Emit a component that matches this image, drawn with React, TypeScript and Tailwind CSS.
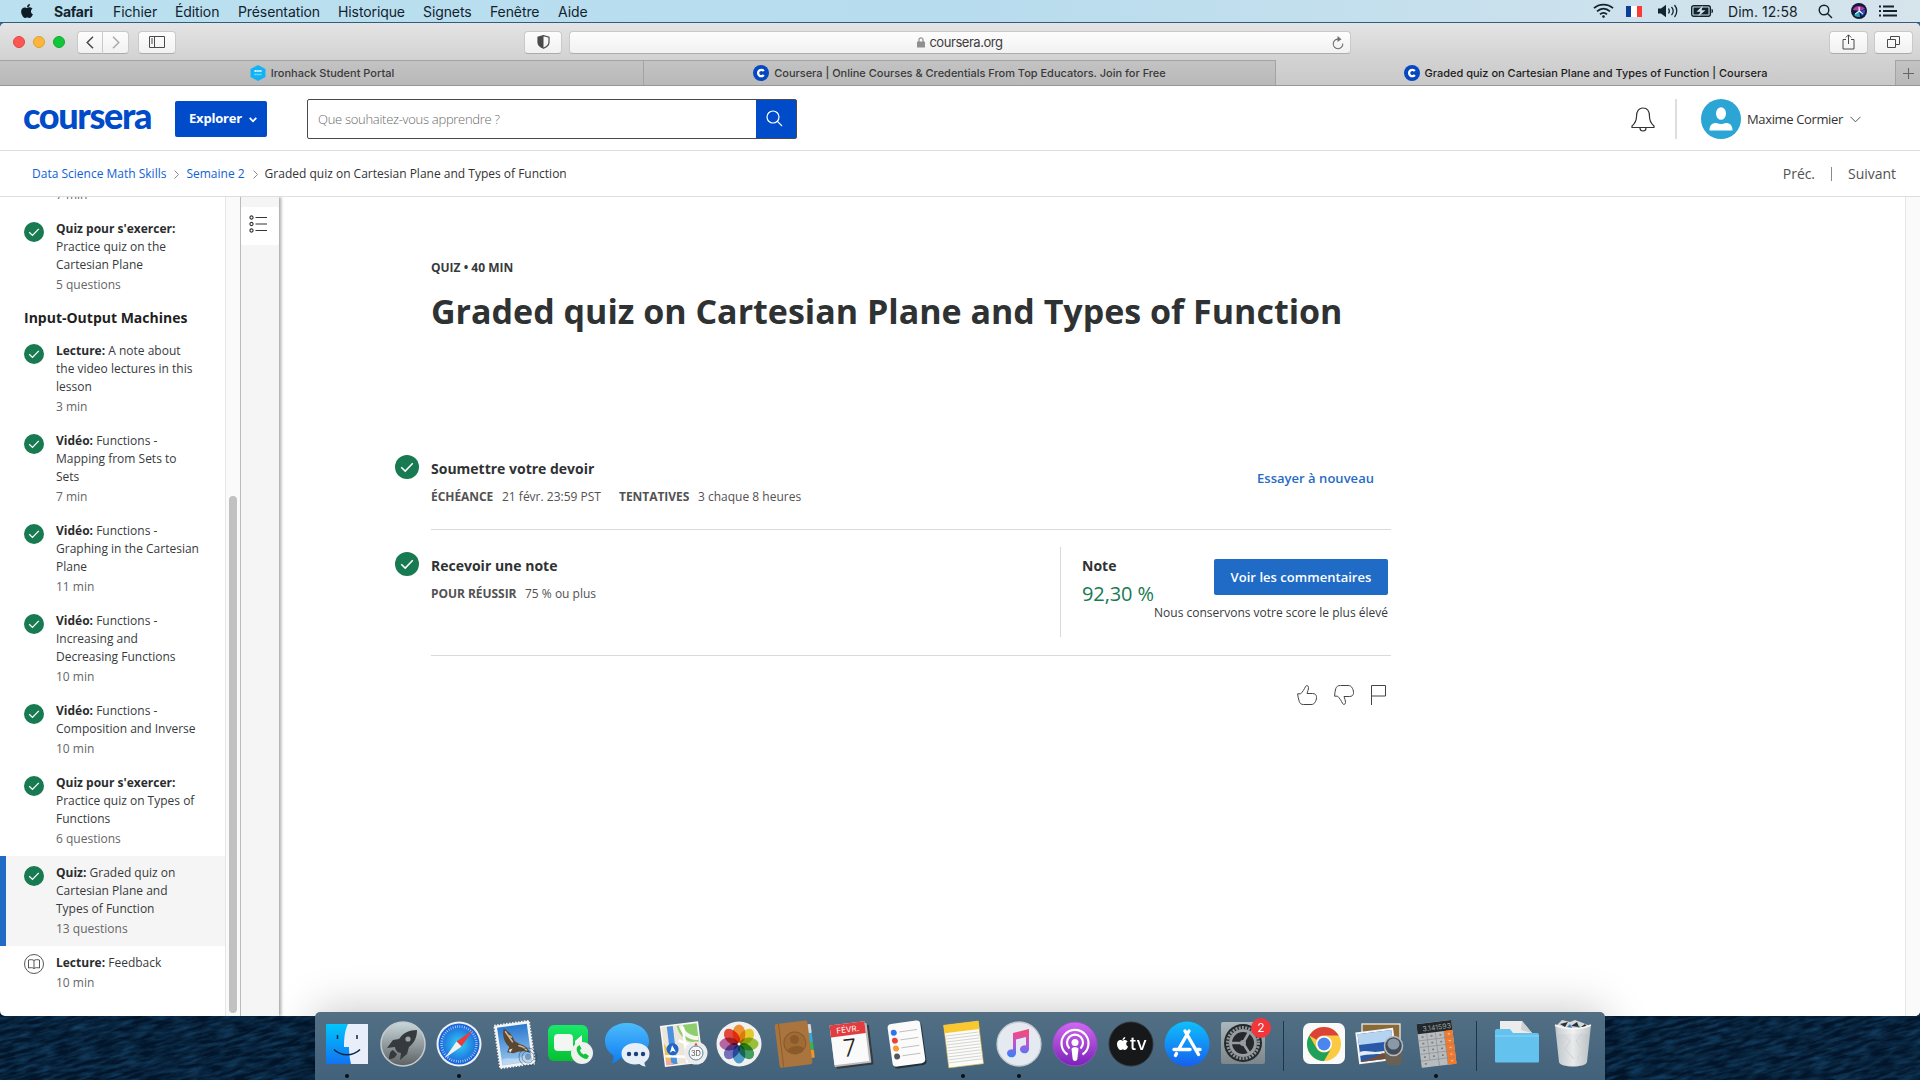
import React from "react";
import { FaApple } from "react-icons/fa";

const ui = "font-[Inter,sans-serif]";

/* ---------- menu bar ---------- */

function MenuBar() {
  return (
    <div className={`flex h-[23px] shrink-0 items-center border-b border-[#2f5d82] bg-linear-to-r from-[#bbe0ef] via-[#b7dcee] to-[#d6e4ec] text-[14px] tracking-[-0.1px] text-[#12232e] ${ui}`}>
      <FaApple className="ml-[20px] h-[16px] w-[14px] text-[#0d1c26]" />
      <span className="ml-[20px] w-[59px] font-bold tracking-[-0.25px]">Safari</span>
      <span className="w-[62px]">Fichier</span>
      <span className="w-[63px]">Édition</span>
      <span className="w-[100px]">Présentation</span>
      <span className="w-[85px]">Historique</span>
      <span className="w-[67px]">Signets</span>
      <span className="w-[68px]">Fenêtre</span>
      <span>Aide</span>
      <div className="ml-auto flex items-center">
        <svg className="mr-[12px]" width="21" height="16" viewBox="0 0 21 16" fill="none" stroke="#12232e" strokeWidth="1.8">
          <path d="M1 5.2C6 .4 15 .4 20 5.2M4 8.4C8 4.8 13 4.8 17 8.4M7 11.4C9 9.5 12 9.5 14 11.4" />
          <circle cx="10.5" cy="13.6" r="1.3" fill="#12232e" stroke="none" />
        </svg>
        <span className="mr-[16px] flex h-[11px] w-[16px]">
          <i className="flex-1 bg-[#0a3d9c]" />
          <i className="flex-1 bg-white" />
          <i className="flex-1 bg-[#fb3a35]" />
        </span>
        <svg className="mr-[12px]" width="21" height="14" viewBox="0 0 21 14" fill="none" stroke="#12232e" strokeWidth="1.3">
          <path d="M0 4.5h3L8 .8v12.4L3 9.500H0z" fill="#12232e" stroke="none" />
          <path d="M10.500 4.500c1 1.500 1 3.500 0 5M13.500 2.800c2 2.500 2 6 0 8.400M16.500 1c3 3.500 3 8.500 0 12" />
        </svg>
        <svg className="mr-[14px]" width="23" height="12" viewBox="0 0 23 12">
          <rect x=".7" y=".7" width="18.600" height="10.600" rx="2" fill="none" stroke="#12232e" strokeWidth="1.400" />
          <path d="M20.500 3.800c2 0 2 4.400 0 4.400z" fill="#12232e" />
          <rect x="2.500" y="2.500" width="15" height="7" fill="#12232e" />
          <path d="M12 .5 5.500 6.800h4L7 11.500l7.500-6.300h-4z" fill="#d3e4ec" />
        </svg>
        <span className="w-[90px] tracking-[0.05px]">Dim. 12:58</span>
        <svg className="mr-[18px]" width="15" height="15" viewBox="0 0 15 15" fill="none" stroke="#12232e" strokeWidth="1.400">
          <circle cx="6" cy="6" r="4.800" />
          <path d="M9.500 9.500 14 14" />
        </svg>
        <svg className="mr-[12px]" width="16" height="16" viewBox="0 0 16 16">
          <circle cx="8" cy="8" r="8" fill="#121a3a" />
          <path d="M2 7c1-4 8-6 12-1L9 8z" fill="#b03aa8" />
          <path d="M8 8l6-1c0 3-1 5-3 6z" fill="#3257c9" />
          <path d="M8 7 3 12c2 2 4 2 6 2z" fill="#27a7bd" />
          <path d="M8 4v4L4 11 8 8.500l4 2.500L8.500 7.500z" fill="#fff" stroke="#fff" strokeWidth=".6" />
        </svg>
        <svg className="mr-[23px]" width="18" height="12" viewBox="0 0 18 12" fill="#12232e">
          <path d="M0 .5h2v2H0zM0 5h2v2H0zM0 9.500h2v2H0zM4 .5h11v2H4zM4 5h14v2H4zM4 9.500h14v2H4z" />
        </svg>
      </div>
    </div>
  );
}

/* ---------- Safari chrome ---------- */

const btn =
  "flex h-[23px] items-center justify-center border border-[#c9c9c9] border-b-[#acacac] bg-linear-to-b from-[#fdfdfd] to-[#f1f1f1]";

function Toolbar() {
  return (
    <div className="flex h-[37px] shrink-0 items-center rounded-t-[5px] bg-linear-to-b from-[#e4e4e4] to-[#d2d2d2] pt-px">
      <i className="ml-[13px] size-[12px] rounded-full border border-[#e2463f] bg-[#fc5753]" />
      <i className="ml-[8px] size-[12px] rounded-full border border-[#dfa032] bg-[#fdb63a]" />
      <i className="ml-[8px] size-[12px] rounded-full border border-[#12ac28] bg-[#10c63a]" />
      <div className={`${btn} ml-[12px] w-[26px] rounded-l-[4px]`}>
        <svg width="8" height="13" viewBox="0 0 8 13" fill="none" stroke="#4a4a4a" strokeWidth="1.500"><path d="M7 .7 1.200 6.500 7 12.300" /></svg>
      </div>
      <div className={`${btn} w-[26px] rounded-r-[4px] border-l-0`}>
        <svg width="8" height="13" viewBox="0 0 8 13" fill="none" stroke="#ababab" strokeWidth="1.500"><path d="M1 .7 6.800 6.500 1 12.300" /></svg>
      </div>
      <div className={`${btn} ml-[9px] w-[38px] rounded-[4px]`}>
        <svg width="16" height="12" viewBox="0 0 16 12" fill="none" stroke="#4a4a4a"><path d="M.5.5h15v11H.5zM5.500.5v11M2 3h2M2 5h2M2 7h2" /></svg>
      </div>
      <div className={`${btn} ml-[348px] w-[38px] rounded-[4px]`}>
        <svg width="13" height="14" viewBox="0 0 13 14"><path d="M6.500.7 1 2.200v5c0 2.800 2.500 4.800 5.500 6 3-1.200 5.500-3.200 5.500-6v-5z" fill="none" stroke="#4a4a4a" strokeWidth="1.200" /><path d="M6.500.7 1 2.200v5c0 2.800 2.500 4.800 5.500 6z" fill="#4a4a4a" /></svg>
      </div>
      <div className={`${btn} relative ml-[7px] w-[782px] rounded-[4px]`}>
        <svg className="mr-[4px]" width="8" height="11" viewBox="0 0 8 11"><path d="M2 5V2.800a2 2 0 0 1 4 0V5" fill="none" stroke="#8f8f8f" strokeWidth="1.200" /><rect y="4.500" width="8" height="6" rx=".6" fill="#8f8f8f" /></svg>
        <span className={`pt-px text-[13px] tracking-[-0.45px] text-[#3c3c3c] ${ui}`}>coursera.org</span>
        <svg className="absolute right-[6px] top-[4px]" width="12" height="14" viewBox="0 0 12 14" fill="none" stroke="#6e6e6e" strokeWidth="1.100"><path d="M7 3.200A4.800 4.800 0 1 0 10.800 7.500" /><path d="M5.500 0v6l4-2.800z" fill="#6e6e6e" stroke="none" /></svg>
      </div>
      <div className={`${btn} ml-auto w-[39px] rounded-[4px]`}>
        <svg width="13" height="16" viewBox="0 0 13 16" fill="none" stroke="#4a4a4a"><path d="M4 5.500H1v9.500h11V5.500H9M6.500 10V1M3.800 3.500 6.500 .8l2.700 2.700" /></svg>
      </div>
      <div className={`${btn} ml-[6px] mr-[7px] w-[39px] rounded-[4px]`}>
        <svg width="13" height="12" viewBox="0 0 13 12" fill="none" stroke="#4a4a4a"><path d="M.5 3.500h8v8h-8zM3.500 3.500V.5h9v8h-4" /></svg>
      </div>
    </div>
  );
}

function CourseraMark() {
  return (
    <svg className="mr-[5px]" width="16" height="16" viewBox="0 0 16 16">
      <circle cx="8" cy="8" r="8" fill="#0748c2" />
      <path d="M10.800 6A3.200 3.200 0 1 0 10.800 10" fill="none" stroke="#fff" strokeWidth="2.300" />
    </svg>
  );
}

function Tabs() {
  const tab = "flex h-full items-center justify-center border-t border-[#a3a3a3] bg-linear-to-b from-[#c3c3c3] to-[#b9b9b9]";
  return (
    <div className={`flex h-[26px] shrink-0 border-b border-[#979797] bg-[#cdcdcd] text-[11px] font-medium text-[#3a3a3a] ${ui}`}>
      <div className={`${tab} w-[644px] border-r pl-px`}>
        <svg className="mr-[5px]" width="16" height="16" viewBox="0 0 16 16">
          <path d="M8 0l7.500 4v8L8 16 .5 12V4z" fill="#12b3f5" />
          <path d="M4.500 6h7" stroke="#dff5ff" strokeWidth="2" strokeDasharray="1.400 .5" />
          <path d="M4.500 9.500h7" stroke="#a4e0fb" strokeWidth="1.500" strokeDasharray="1.200 .7" />
        </svg>
        <span>Ironhack Student Portal</span>
      </div>
      <div className={`${tab} w-[632px] border-r`}>
        <CourseraMark />
        <span className="tracking-[-0.01px]">Coursera | Online Courses &amp; Credentials From Top Educators. Join for Free</span>
      </div>
      <div className="flex w-[619px] items-center justify-center bg-linear-to-b from-[#d2d2d2] to-[#c9c9c9] pt-px text-[#1c1c1c]">
        <CourseraMark />
        <span className="tracking-[-0.01px]">Graded quiz on Cartesian Plane and Types of Function | Coursera</span>
      </div>
      <div className={`${tab} flex-1 border-l`}>
        <svg width="11" height="11" viewBox="0 0 11 11" stroke="#666" strokeWidth="1.100"><path d="M5.500 0v11M0 5.500h11" /></svg>
      </div>
    </div>
  );
}

/* ---------- Coursera header ---------- */

function Header() {
  return (
    <header className="flex h-[65px] shrink-0 items-center border-b border-[#dedede] pt-px">
      <span className="ml-[23px] mt-[-7px] w-[129px] font-[Lato,sans-serif] text-[36px] font-black leading-[40px] tracking-[-1.35px] text-[#004bca]">coursera</span>
      <button className="ml-[23px] flex h-[36px] w-[92px] items-center rounded-[2px] bg-[#004bca] pl-[14px] pt-px text-[13px] font-bold text-white">
        <span className="tracking-[-0.2px]">Explorer</span>
        <svg className="ml-[7px] mt-[2px]" width="8" height="6" viewBox="0 0 8 6" fill="none" stroke="#fff" strokeWidth="1.800"><path d="M.7.8 4 4.300 7.300.8" /></svg>
      </button>
      <div className="ml-[40px] flex h-[40px] w-[490px] items-center rounded-[2px] border border-[#4a4a4a]">
        <span className="flex-1 pl-[10px] pt-[2px] text-[13px] font-light tracking-[-0.29px] text-[#6a6a6a]">Que souhaitez-vous apprendre ?</span>
        <span className="flex h-full w-[40px] items-center justify-center bg-[#004bca]">
          <svg className="mr-[3px]" width="17" height="17" viewBox="0 0 17 17" fill="none" stroke="#fff" strokeWidth="1.200"><circle cx="7" cy="7" r="6" /><path d="M11.200 11.200 16 16" /></svg>
        </span>
      </div>
      <svg className="ml-auto mt-[3px]" width="24" height="26" viewBox="0 0 24 26" fill="none" stroke="#333" strokeWidth="1.200">
        <path d="M1 20.500v-1.500c3-2.500 4.500-5 4.500-9.500C5.500 4 8 1 12 1s6.500 3 6.500 8.500c0 4.500 1.500 7 4.500 9.500v1.500zM9 21c0 4 6 4 6 0" />
      </svg>
      <i className="ml-[20px] h-[40px] w-[2px] bg-[#dedede]" />
      <svg className="ml-[24px]" width="40" height="40" viewBox="0 0 40 40">
        <circle cx="20" cy="20" r="20" fill="#2aa5d4" />
        <ellipse cx="20" cy="14.500" rx="5" ry="6.300" fill="#fff" />
        <path d="M8.500 31.500c0-5 2-7.500 7-7.500 3 1.300 6 1.300 9 0 5 0 7 2.500 7 7.500z" fill="#fff" />
      </svg>
      <span className="ml-[6px] w-[103px] pt-[2px] text-[13px] tracking-[-0.36px] text-[#333]">Maxime Cormier</span>
      <svg className="mr-[59px] mt-[2px]" width="11" height="7" viewBox="0 0 11 7" fill="none" stroke="#555"><path d="M.5.8l5 5 5-5" /></svg>
    </header>
  );
}

function Chevron() {
  return <svg className="ml-[8px] mr-[7px] mt-[2px]" width="5" height="9" viewBox="0 0 5 9" fill="none" stroke="#8a8a8a"><path d="M.5.5l4 4-4 4" /></svg>;
}

function Breadcrumb() {
  return (
    <nav className="flex h-[46px] shrink-0 items-center border-b border-[#dedede] pl-[32px] text-[12px] text-[#333]">
      <a className="text-[#0f62d6]">Data Science Math Skills</a>
      <Chevron />
      <a className="text-[#0f62d6]">Semaine 2</a>
      <Chevron />
      <span className="w-[301px] overflow-hidden whitespace-nowrap">Graded quiz on Cartesian Plane and Types of Function</span>
      <span className="ml-auto text-[14px] tracking-[-0.05px] text-[#525252]">Préc.</span>
      <i className="ml-[16px] mr-[16px] h-[14px] w-px bg-[#8a8a8a]" />
      <span className="mr-[24px] text-[14px] tracking-[-0.02px] text-[#525252]">Suivant</span>
    </nav>
  );
}

/* ---------- sidebar ---------- */

function Check({ size }: { size: number }) {
  return (
    <svg width={size} height={size} viewBox="0 0 20 20" className="shrink-0">
      <circle cx="10" cy="10" r="10" fill="#177a51" />
      <path d="M5.200 10.200l3.300 3.200 6.300-6.500" fill="none" stroke="#fff" strokeWidth="1.300" />
    </svg>
  );
}

function Book() {
  return (
    <svg width="20" height="20" viewBox="0 0 20 20" fill="none" stroke="#444" strokeWidth=".9" className="shrink-0">
      <circle cx="10" cy="10" r="9.500" />
      <path d="M10 6.500C9 5.500 6 5.500 4.500 6v8c1.500-.5 4.500-.5 5.500.5 1-1 4-1 5.500-.5V6c-1.500-.5-4.500-.5-5.500.5zM10 6.500v8" />
    </svg>
  );
}

type Entry = { kind: string; lines: string[]; meta: string; active?: boolean; open?: boolean };

function Item({ kind, lines, meta, active, open }: Entry) {
  return (
    <div className={active ? "flex border-l-6 border-[#1f6bc6] bg-[#f5f5f5] py-[8px] pl-[18px]" : "flex py-[8px] pl-[24px]"}>
      <span className={open ? "w-[32px]" : "w-[32px] pt-[2px]"}>{open ? <Book /> : <Check size={20} />}</span>
      <div className="whitespace-nowrap text-[12px] leading-[18px] text-[#373a3c]">
        <b className="text-[#2a2c2e]">{kind}</b> {lines[0]}
        {lines.slice(1).map((l) => (
          <div key={l}>{l}</div>
        ))}
        <div className="mt-[2px] text-[#666]">{meta}</div>
      </div>
    </div>
  );
}

const lessons: Entry[] = [
  { kind: "Lecture:", lines: ["A note about", "the video lectures in this", "lesson"], meta: "3 min" },
  { kind: "Vidéo:", lines: ["Functions -", "Mapping from Sets to", "Sets"], meta: "7 min" },
  { kind: "Vidéo:", lines: ["Functions -", "Graphing in the Cartesian", "Plane"], meta: "11 min" },
  { kind: "Vidéo:", lines: ["Functions -", "Increasing and", "Decreasing Functions"], meta: "10 min" },
  { kind: "Vidéo:", lines: ["Functions -", "Composition and Inverse"], meta: "10 min" },
  { kind: "Quiz pour s'exercer:", lines: ["", "Practice quiz on Types of", "Functions"], meta: "6 questions" },
  { kind: "Quiz:", lines: ["Graded quiz on", "Cartesian Plane and", "Types of Function"], meta: "13 questions", active: true },
  { kind: "Lecture:", lines: ["Feedback"], meta: "10 min", open: true },
];

function Sidebar() {
  return (
    <>
      <aside className="w-[225px] shrink-0 overflow-hidden">
        <div className="-mt-[11px] mb-[8px] pl-[56px] text-[12px] leading-[18px] text-[#666]">7 min</div>
        <Item kind="Quiz pour s'exercer:" lines={["", "Practice quiz on the", "Cartesian Plane"]} meta="5 questions" />
        <h3 className="h-[32px] pl-[24px] text-[14px] font-bold leading-[32px] text-[#1f1f1f]">Input-Output Machines</h3>
        {lessons.map((l, i) => (
          <Item key={i} {...l} />
        ))}
      </aside>
      <div className="flex w-[16px] shrink-0 flex-col items-center border-l border-r border-l-[#e6e6e6] border-r-[#bdbdbd] bg-[#fafafa] pt-[299px]">
        <i className="h-[517px] w-[8px] rounded-full bg-[#c1c1c1]" />
      </div>
      <div className="z-10 w-[38px] shrink-0 bg-[#f5f5f5] pt-[10px] shadow-[2px_0_3px_0px_rgba(0,0,0,0.35)]">
        <div className="flex h-[38px] items-center justify-center rounded-[2px] bg-white pr-[4px]">
          <svg className="mt-[-4px]" width="18" height="18" viewBox="0 0 18 18" fill="none" stroke="#333" strokeWidth="1.100">
            <circle cx="2.500" cy="2.500" r="1.600" /><circle cx="2.500" cy="9" r="1.600" /><circle cx="2.500" cy="15.500" r="1.600" />
            <path d="M6.500 2.500H18M6.500 9H18M6.500 15.500H18" />
          </svg>
        </div>
      </div>
    </>
  );
}

/* ---------- main column ---------- */

const meta = "flex h-[18px] items-center text-[12px] text-[#525252]";

function Main() {
  return (
    <main className="flex min-w-0 flex-1 flex-col pl-[116px]">
      <div className="ml-[36px] mt-[62px] text-[12px] font-bold leading-[18px] text-[#373a3c]">QUIZ • 40 MIN</div>
      <h1 className="ml-[36px] mt-[10px] whitespace-nowrap text-[34px] font-bold leading-[48px] text-[#2f3233]">
        Graded quiz on Cartesian Plane and Types of Function
      </h1>
      <div className="mt-[120px] flex h-[74px]">
        <span className="w-[36px]"><Check size={24} /></span>
        <div className="flex flex-1">
          <div className="flex-1 pt-[4px]">
            <h2 className="text-[14px] font-bold leading-[20px] text-[#2f3233]">Soumettre votre devoir</h2>
            <div className={`${meta} mt-[9px]`}>
              <b className="w-[71px] font-bold tracking-[-0.05px]">ÉCHÉANCE</b><span className="w-[117px]">21 févr. 23:59 PST</span>
              <b className="w-[79px] font-bold tracking-[-0.05px]">TENTATIVES</b><span>3 chaque 8 heures</span>
            </div>
          </div>
          <a className="mr-[531px] pt-[13px] text-[13px] font-semibold leading-[20px] tracking-[0.03px] text-[#1f6bc6]">Essayer à nouveau</a>
        </div>
      </div>
      <i className="ml-[36px] h-px w-[960px] bg-[#dadada]" />
      <div className="flex h-[125px] w-[996px]">
        <span className="w-[36px] pt-[22px]"><Check size={24} /></span>
        <div className="w-[629px] pt-[26px]">
          <h2 className="text-[14px] font-bold leading-[20px] text-[#2f3233]">Recevoir une note</h2>
          <div className={`${meta} mt-[9px]`}><b className="w-[94px] font-bold tracking-[-0.05px]">POUR RÉUSSIR</b><span>75 % ou plus</span></div>
        </div>
        <div className="mt-[17px] flex h-[90px] flex-1 border-l border-[#dadada] pl-[21px]">
          <div className="whitespace-nowrap pt-[9px]">
            <div className="text-[14px] font-bold leading-[20px] text-[#2f3233]">Note</div>
            <div className="mt-[4px] text-[20px] leading-[28px] tracking-[-0.1px] text-[#177a51]">92,30 %</div>
          </div>
          <div className="mr-[3px] flex flex-1 flex-col items-end whitespace-nowrap pt-[12px]">
            <button className="h-[36px] w-[174px] rounded-[2px] bg-[#1f6bc6] pt-px text-[13px] font-semibold tracking-[0.03px] text-white">Voir les commentaires</button>
            <span className="mt-[9px] text-[12px] leading-[18px] text-[#373a3c]">Nous conservons votre score le plus élevé</span>
          </div>
        </div>
      </div>
      <i className="ml-[36px] h-px w-[960px] bg-[#dadada]" />
      <div className="mt-[29px] flex w-[991px] justify-end gap-[17px]">
        <svg width="20" height="20" viewBox="0 0 20 20" fill="none" stroke="#444"><path d="M.6 8.800h3C5.500 7 7.500 4 8.500 1.500c.6-1.300 3-1.200 3 1 0 2-.9 3.800-1.500 6h5.500c5 0 4.500 5 3 8-.9 2-2.200 3-4.500 3H6.500c-2.500 0-3.700-1.200-4.200-3C1.500 14 .8 11.500.6 8.800z" /></svg>
        <svg width="20" height="20" viewBox="0 0 20 20" fill="none" stroke="#444"><path d="M.6 11.200h3c1.900 1.800 3.900 4.800 4.900 7.300.6 1.300 3 1.200 3-1 0-2-.9-3.800-1.500-6h5.500c5 0 4.500-5 3-8-.9-2-2.200-3-4.500-3H6.500c-2.500 0-4.200 1.200-4.700 3C1 6 .8 8.500.6 11.200z" /></svg>
        <svg width="15" height="20" viewBox="0 0 15 20" fill="none" stroke="#444"><path d="M.5 20V.5h14v10.500H.5" /></svg>
      </div>
    </main>
  );
}

/* ---------- Dock ---------- */

function Cell({ children, dot }: { children: React.ReactNode; dot?: boolean }) {
  return (
    <svg width="56" height="68" viewBox="0 0 56 68" className="shrink-0">
      {children}
      {dot && <circle cx="28" cy="64" r="2" fill="#0a0f14" />}
    </svg>
  );
}

const petals = ["#f98d1d", "#efcf12", "#94c122", "#2e9a55", "#3f97d2", "#6664bd", "#b558a0", "#ee3326"];

function Dock() {
  return (
    <div className="absolute bottom-0 left-[315px] z-20 flex h-[68px] w-[1290px] overflow-hidden rounded-t-[5px] bg-linear-to-b from-[#526f84] to-[#42627b] px-[4px] shadow-[0_-2px_44px_rgba(0,0,0,0.22)]">
      <svg width="0" height="0" className="absolute">
        <defs>
          <linearGradient id="finder" x2="0" y2="1"><stop stopColor="#00c6fb" /><stop offset="1" stopColor="#1173f2" /></linearGradient>
          <linearGradient id="rocket" x2="0" y2="1"><stop stopColor="#c9d8dc" /><stop offset="1" stopColor="#5d6062" /></linearGradient>
          <radialGradient id="compass"><stop stopColor="#2fd2f7" /><stop offset="1" stopColor="#1c5fd8" /></radialGradient>
          <linearGradient id="green" x2="0" y2="1"><stop stopColor="#19e86a" /><stop offset="1" stopColor="#06c032" /></linearGradient>
          <linearGradient id="bubble" x2="0" y2="1"><stop stopColor="#4cbcfb" /><stop offset="1" stopColor="#0f7df2" /></linearGradient>
          <linearGradient id="sky" x2="0" y2="1"><stop stopColor="#2878cf" /><stop offset="1" stopColor="#9cc8ee" /></linearGradient>
          <linearGradient id="note" x2="0" y2="1"><stop stopColor="#fa4a62" /><stop offset=".5" stopColor="#c253d6" /><stop offset="1" stopColor="#2b86f8" /></linearGradient>
          <linearGradient id="pod" x2="0" y2="1"><stop stopColor="#cf6af0" /><stop offset="1" stopColor="#7c22b8" /></linearGradient>
          <linearGradient id="store" x2="0" y2="1"><stop stopColor="#0fc0fc" /><stop offset="1" stopColor="#1660ee" /></linearGradient>
          <linearGradient id="steel" x2="0" y2="1"><stop stopColor="#a9b8bd" /><stop offset="1" stopColor="#7d868a" /></linearGradient>
          <linearGradient id="bin" x2="1" y2="0"><stop stopColor="#c6cacd" /><stop offset=".5" stopColor="#f2f2f2" /><stop offset="1" stopColor="#bfc3c6" /></linearGradient>
        </defs>
      </svg>

      {/* Finder */}
      <Cell dot>
        <rect x="7" y="12" width="42" height="40" rx="1" fill="url(#finder)" />
        <path d="M29 12h20v40H32c-1-5-2-9-2-17h-5c0-10 1-17 4-23z" fill="#e8eefa" />
        <path d="M18.500 23v4M38 23v4" stroke="#0c2440" strokeWidth="1.500" />
        <path d="M15 37.500c7 7 19 7 26 0" fill="none" stroke="#0c2440" strokeWidth="1.500" />
      </Cell>
      {/* Launchpad */}
      <Cell>
        <circle cx="28" cy="32" r="22" fill="url(#rocket)" stroke="#c4cbce" strokeWidth="1.500" />
        <path d="M42 18c-8 0-14 3-18 9l-6 1-6 8 8-1c0 3 3 6 6 6l-1 7 7-6 2-7c5-4 8-9 8-17z" fill="#373a3d" />
        <path d="M18 38c-3 1-4 5-4 9 4 0 7-2 8-5z" fill="#373a3d" />
        <circle cx="33" cy="27" r="2.600" fill="#9aa5a9" />
      </Cell>
      {/* Safari */}
      <Cell dot>
        <circle cx="28" cy="32" r="22.500" fill="#eef1f5" />
        <circle cx="28" cy="32" r="20.500" fill="url(#compass)" />
        <circle cx="28" cy="32" r="17.500" fill="none" stroke="#bfe2fa" strokeWidth="2.500" strokeDasharray=".7 1.590" />
        <path d="M42 18 25.500 29.500l5 5z" fill="#ee3b39" />
        <path d="M14 46l11.500-16.500 5 5z" fill="#f1f1f1" />
      </Cell>
      {/* Mail */}
      <Cell>
        <g transform="rotate(-8 28 32)">
          <rect x="10" y="11" width="35" height="43" fill="#f4f4f4" stroke="#f4f4f4" strokeWidth="2" strokeDasharray="1.500 1.500" />
          <rect x="12.500" y="13.500" width="30" height="38" fill="url(#sky)" />
          <path d="M19 15c4 3 8 8 9 14l5 4c5 2 7 5 9 10-4-3-8-3-12-3l-5 1-6-2 3-5c-4-4-6-12-3-19z" fill="#5b4632" />
          <path d="M20 18c2 4 4 8 6 12M31 34c3 1 6 3 8 6M22 22l4 3" stroke="#c9b595" strokeWidth="1.500" fill="none" />
          <path d="M21 37l4-1-3 4z" fill="#f3efe4" />
          <path d="M13 46c6-3 12 2 18 0s8-2 11-1v6H13z" fill="#fff" fillOpacity=".35" />
        </g>
        <circle cx="41" cy="45" r="9" fill="none" stroke="#24405a" strokeOpacity=".5" />
        <circle cx="41" cy="45" r="6" fill="none" stroke="#24405a" strokeOpacity=".45" />
        <circle cx="41" cy="45" r="3" fill="#24405a" fillOpacity=".4" />
      </Cell>
      {/* FaceTime */}
      <Cell>
        <rect x="5" y="13" width="40" height="36" rx="6" fill="url(#green)" />
        <rect x="11" y="22" width="19" height="17" rx="4" fill="#f3f6f3" />
        <path d="M32 29l7-6v14l-7-2z" fill="#f3f6f3" />
        <circle cx="39" cy="41" r="11" fill="#eef1ee" />
        <path d="M34 35c-2 5 4 12 10 12l2-3-3.500-2.500-2 1c-2-1-3.500-3-3.500-4.500l1.500-1.500L36.500 33z" fill="#10c53d" />
      </Cell>
      {/* Messages */}
      <Cell>
        <path d="M28 11c13 0 22 8 22 18s-9 18-22 18c-3 0-5 0-7-1-2 3-5 5-9 5 3-3 3-5 2-8-5-3-8-8-8-14 0-10 9-18 22-18z" fill="url(#bubble)" />
        <path d="M36.500 31c8 0 14 4.500 14 10.500 0 4-2 7-5 9 0 2 .5 3 1.500 4-3 0-5-1-6.500-2.500-11 2-18-3.500-18-10.500C22.500 35.500 28.500 31 36.500 31z" fill="#e6eff8" />
        <g fill="#1b3f78"><circle cx="30" cy="42" r="2.200" /><circle cx="37" cy="42" r="2.200" /><circle cx="44" cy="42" r="2.200" /></g>
      </Cell>
      {/* Maps */}
      <Cell>
        <g transform="rotate(-7 28 32)">
          <rect x="8" y="12" width="37" height="40" fill="#ece6da" stroke="#f7f7f5" strokeWidth="1.500" />
          <path d="M24 13h20v19C32 32 25 24 24 13z" fill="#8fce6e" />
          <path d="M28 13c1 8 7 14 16 15" stroke="#f7f5ee" strokeWidth="4" fill="none" />
          <path d="M9 29l12 22H9z" fill="#f5c04a" />
          <path d="M14 13h6v38h-6z" fill="#4a90e0" />
          <path d="M24 28l17 9M9 42l35 5M30 15v36" stroke="#fff" strokeWidth="2.500" />
          <path d="M9 45l8 6H9z" fill="#f2a6b2" />
          <circle cx="17" cy="36" r="6" fill="#1f66c8" />
          <path d="M17 32l3 7-3-1.500-3 1.500z" fill="#fff" />
        </g>
        <circle cx="41" cy="41" r="11.500" fill="#ececec" />
        <circle cx="41" cy="41" r="7" fill="#f7f7f7" stroke="#5987a6" />
        <path d="M41 30.500l1.700 3h-3.400z" fill="#e8403c" />
        <text x="41" y="44" fontSize="7.500" textAnchor="middle" fill="#555" fontFamily="Inter">3D</text>
      </Cell>
      {/* Photos */}
      <Cell>
        <circle cx="28" cy="32" r="22.500" fill="#f1f1f0" />
        {petals.map((c, i) => (
          <ellipse key={c} cx="28" cy="22" rx="6.400" ry="9.500" fill={c} className="mix-blend-multiply" fillOpacity=".88" transform={`rotate(${i * 45} 28 32)`} />
        ))}
        <circle cx="28" cy="32" r="1.500" fill="#fff" />
      </Cell>
      {/* Contacts */}
      <Cell>
        <g transform="rotate(-7 28 32)">
          <rect x="37" y="14" width="9" height="9" rx="1" fill="#d6d8da" />
          <rect x="37" y="23" width="9" height="9" fill="#35a9d8" />
          <rect x="37" y="32" width="9" height="8" fill="#33b553" />
          <rect x="37" y="40" width="9" height="8" rx="1" fill="#f2932b" />
          <rect x="10" y="10" width="33" height="44" rx="2" fill="#a9743d" />
          <path d="M14 10v44" stroke="#8f5e2d" />
          <circle cx="28" cy="31" r="11" fill="#a06b35" stroke="#8a5a2a" />
          <circle cx="28" cy="27.500" r="4.500" fill="#8a5a2a" />
          <path d="M20 38c1-5 15-5 16 0-4 5-12 5-16 0z" fill="#8a5a2a" />
        </g>
      </Cell>
      {/* Calendar */}
      <Cell>
        <g transform="rotate(-7 28 32)">
          <rect x="11" y="15" width="37" height="40" rx="1" fill="#343a3f" />
          <rect x="9" y="13" width="37" height="40" rx="1" fill="#b8bcbe" />
          <rect x="9" y="11" width="35" height="40" fill="#fafafa" />
          <rect x="9" y="11" width="35" height="12" fill="#e33c3f" />
          <text x="26.500" y="20" fontSize="8" textAnchor="middle" fill="#fff" fontFamily="Inter">FÉVR.</text>
          <text x="26.500" y="44" fontSize="24" fontWeight="300" textAnchor="middle" fill="#222" fontFamily="Inter">7</text>
        </g>
      </Cell>
      {/* Reminders */}
      <Cell>
        <g transform="rotate(-8 28 32)">
          <rect x="12" y="12" width="33" height="43" rx="4" fill="#23303a" />
          <rect x="11" y="10" width="33" height="43" rx="4" fill="#fbfbfb" />
          <path d="M22 19h18M22 27h18M22 35h18M22 43h18" stroke="#b5b5b5" strokeWidth=".8" />
          <circle cx="16.500" cy="19" r="3" fill="#2b77ea" /><circle cx="16.500" cy="27" r="3" fill="#ea4335" /><circle cx="16.500" cy="35" r="3" fill="#f59a36" /><circle cx="16.500" cy="43" r="3" fill="#54585c" />
        </g>
      </Cell>
      {/* Notes */}
      <Cell dot>
        <g transform="rotate(-7 28 32)">
          <rect x="11" y="11" width="35" height="43" fill="#fbfbf8" stroke="#c9a94e" strokeWidth=".6" />
          <rect x="11" y="11" width="35" height="8" fill="#f9c72f" />
          <path d="M12 22h33M12 25h33M12 28h33M12 31h33M12 34h33M12 37h33M12 40h33M12 43h33M12 46h33M12 49h33" stroke="#c6c6c6" strokeWidth=".7" />
        </g>
      </Cell>
      {/* Music */}
      <Cell dot>
        <circle cx="28" cy="32" r="22" fill="#e5eaf1" stroke="#c4cad2" strokeWidth="1.300" />
        <path d="M22 21l16-4v20.500a4.500 4 0 1 1-3-4V25l-10 2.500v14a4.500 4 0 1 1-3-4z" fill="url(#note)" />
      </Cell>
      {/* Podcasts */}
      <Cell>
        <circle cx="28" cy="32" r="22" fill="url(#pod)" stroke="#9a4cc9" />
        <g fill="none" stroke="#fff" strokeWidth="2.200">
          <path d="M20.500 42.500a13.500 13.500 0 1 1 15 0" /><path d="M22.500 36.500a8 8 0 1 1 11 0" />
        </g>
        <circle cx="28" cy="30.500" r="3.500" fill="#fff" />
        <path d="M24.500 37c0-2.500 7-2.500 7 0l-1.200 10c-.4 2.500-4.200 2.500-4.600 0z" fill="#fff" />
      </Cell>
      {/* TV */}
      <Cell>
        <circle cx="28" cy="32" r="22" fill="#17181a" stroke="#303338" />
        <FaApple x="12" y="24" size="15" color="#fff" />
        <text x="27" y="38" fontSize="18" fontWeight="500" fill="#fff" fontFamily="Inter">tv</text>
      </Cell>
      {/* App Store */}
      <Cell>
        <circle cx="28" cy="32" r="22.500" fill="url(#store)" />
        <g stroke="#fff" strokeWidth="3.400" strokeLinecap="round"><path d="M30 19 19.500 37.500M26 19l13.500 23.500M15 37.500h16M37 37.500h4M17.500 41.500l-1 2" /></g>
      </Cell>
      {/* System Preferences */}
      <Cell>
        <rect x="6" y="10" width="44" height="42" rx="2" fill="url(#steel)" />
        <circle cx="28" cy="31" r="19" fill="#26292c" />
        <circle cx="28" cy="31" r="15.500" fill="none" stroke="#8d9396" strokeWidth="3" strokeDasharray="2 1.250" />
        <circle cx="28" cy="31" r="12.500" fill="none" stroke="#969c9f" strokeWidth="3" />
        <path d="M28 31H16M28 31l6-10.500M28 31l6.500 10.500" stroke="#969c9f" strokeWidth="2.600" />
        <circle cx="28" cy="31" r="3" fill="#969c9f" />
        <circle cx="46" cy="16" r="10" fill="#f2373b" />
        <text x="46" y="20.300" fontSize="12" textAnchor="middle" fill="#fff" fontFamily="Inter">2</text>
      </Cell>
      <i className="mx-[12px] mt-[9px] h-[50px] w-px bg-[#1f3548]" />
      {/* Chrome */}
      <Cell>
        <rect x="7" y="11" width="42" height="41" rx="7" fill="#fafafa" />
        <circle cx="28" cy="32" r="17" fill="#fcc943" />
        <path d="M13.300 23.500A17 17 0 0 1 42.700 23.500H28a8.500 8.500 0 0 0-7.400 4.200z" fill="#db4337" />
        <path d="M13.300 23.500A17 17 0 0 0 28 49l7.400-12.700a8.500 8.500 0 0 1-14.800 0z" fill="#1fa15c" />
        <circle cx="28" cy="32" r="8" fill="#fff" /><circle cx="28" cy="32" r="6.500" fill="#4a86ee" />
      </Cell>
      {/* Preview */}
      <Cell>
        <rect x="10" y="12" width="38" height="34" fill="#8a6a38" stroke="#f0ece0" strokeWidth="1.300" />
        <g transform="rotate(-7 24 33)">
          <rect x="5" y="18" width="38" height="32" fill="#f7f7f7" />
          <rect x="7" y="20" width="34" height="28" fill="#2a58a8" />
          <rect x="7" y="20" width="34" height="11" fill="#b4d4f2" />
          <path d="M7 38c6-2 12 2 18 2s10-1 16-1v3c-8 2-14 0-20 0s-10-1-14 0z" fill="#e6edf2" /><path d="M7 47l14-2 8-3 12 2v4H7z" fill="#6e5038" />
        </g>
        <path d="M32 36l2 15c3 3 12 3 15 0l2-15z" fill="#6b6153" />
        <ellipse cx="41.500" cy="34" rx="9" ry="9.500" fill="#3f4d5c" stroke="#b9bbb9" strokeWidth="1.500" />
        <ellipse cx="41.500" cy="32" rx="6" ry="5.500" fill="#8a98a8" />
      </Cell>
      {/* Calculator */}
      <Cell dot>
        <g transform="rotate(-7 28 32)">
          <rect x="11" y="10" width="35" height="44" rx="1" fill="#b9bcbe" />
          <rect x="11" y="10" width="35" height="10" fill="#23282c" />
          <text x="45" y="18" fontSize="7" textAnchor="end" fill="#97a29f" fontFamily="Inter">3.141593</text>
          <rect x="37.500" y="20" width="8.500" height="34" fill="#f4792b" />
          <path d="M11 26.800h35M11 33.600h35M11 40.400h35M11 47.200h35M20 20v27M28.800 20v34M37.500 20v34" stroke="#85898c" strokeWidth=".6" />
          <path d="M14.500 23.500h2M23.500 23.500h2M32.500 23.500h2M14.500 30.200h2M23.500 30.200h2M32.500 30.200h2M14.500 37h2M23.500 37h2M32.500 37h2M14.500 43.800h2M23.500 43.800h2M32.500 43.800h2M14.500 50.600h2" stroke="#777" strokeWidth="1.500" />
          <path d="M41 23.500h2M41 30.200h2M41 37h2M41 43.800h2M41 50.600h2" stroke="#ffd9bd" />
        </g>
      </Cell>
      <i className="mx-[12px] mt-[9px] h-[50px] w-px bg-[#1f3548]" />
      {/* Downloads */}
      <Cell>
        <path d="M11 9h22l10 12v8H11z" fill="#ececec" /><path d="M33 9l-1 9 11 3z" fill="#cfcfcf" />
        <path d="M6 19c0-1 .5-2 2-2h13l3 4h24c1.500 0 2 1 2 2v26c0 1-.5 1.500-1.500 1.500h-41C6.500 50.500 6 50 6 49z" fill="#64c2ef" />
        <path d="M6 24h44" stroke="#8ad5f7" />
      </Cell>
      {/* Trash */}
      <Cell>
        <path d="M12 13l5-5 8 2 5-2 8 3 7 3-2 8H13z" fill="#d6d9db" />
        <path d="M15 12l5 3 3-5zM26 14l6-4 2 5zM36 15l4-3 3 4z" fill="#2b3137" /><path d="M22 15l3-3 2 4z" fill="#3e7fc0" /><path d="M32 16l3-2 1 3z" fill="#2b9d80" />
        <path d="M10 13c10 5 26 5 36 0l-4 37c-1 6-27 6-28 0z" fill="url(#bin)" fillOpacity=".94" />
        <path d="M17 22l8 7-5 8 9 10M38 20l-7 9 7 9-6 9" fill="none" stroke="#cfd1d3" strokeWidth="1" />
        <path d="M10 13c10 5 26 5 36 0" fill="none" stroke="#f8f8f8" strokeWidth="1.500" />
      </Cell>
    </div>
  );
}

function Ocean() {
  return (
    <svg className="absolute inset-x-0 bottom-0" width="1920" height="80">
      <defs>
        <filter id="waves" x="0" y="0" width="100%" height="100%" colorInterpolationFilters="sRGB">
          <feTurbulence type="fractalNoise" baseFrequency="0.05 0.3" numOctaves="4" seed="4" />
          <feColorMatrix values="0 0 0 0 0.08  0 0 0 0 0.26  0 0 0 0 0.4  1.8 0 0 0 -0.6" />
        </filter>
      </defs>
      <rect width="1920" height="80" fill="#02152a" />
      <g transform="rotate(-14 960 40)"><rect x="-20" y="-260" width="1960" height="600" filter="url(#waves)" /></g>
    </svg>
  );
}

export default function App() {
  return (
    <div className="relative flex h-[1080px] w-[1920px] flex-col overflow-hidden bg-[#3f6a8e] font-['Open_Sans',sans-serif]">
      <Ocean />
      <MenuBar />
      <div className="relative flex h-[993px] flex-col overflow-hidden rounded-[5px] bg-white">
        <Toolbar />
        <Tabs />
        <Header />
        <Breadcrumb />
        <div className="flex min-h-0 flex-1 overflow-hidden">
          <Sidebar />
          <Main />
          <div className="w-[15px] border-l border-[#e6e6e6] bg-[#fafafa]" />
        </div>
      </div>
      <Dock />
    </div>
  );
}
